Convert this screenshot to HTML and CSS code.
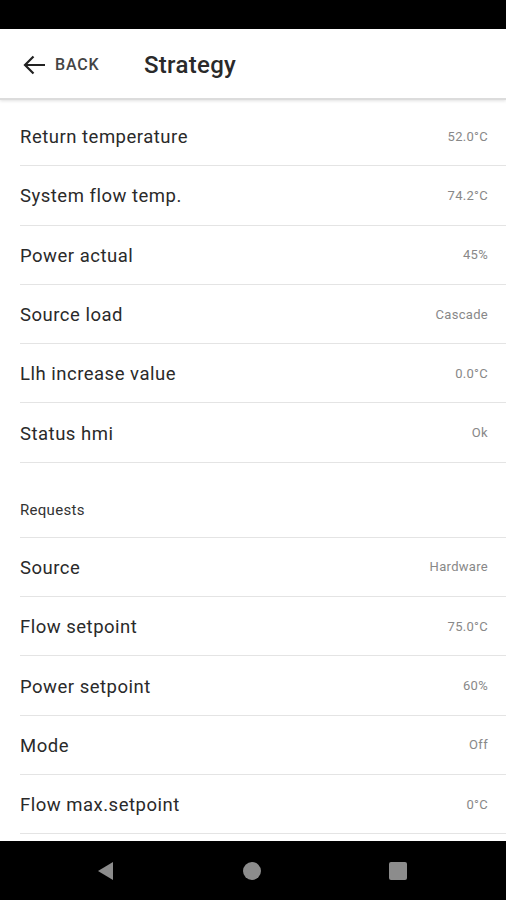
FILE: index.html
```html
<!DOCTYPE html>
<html>
<head>
<meta charset="utf-8">
<link rel="stylesheet" href="styles.css">
</head>
<body>
<div class="screen">
  <div class="statusbar"></div>
  <header class="appbar">
    <div class="back">
      <svg class="back-icon" width="24" height="20" viewBox="0 0 24 20"><path d="M22 10 H2.5 M10.5 1.5 L2 10 L10.5 18.5" fill="none" stroke="#222" stroke-width="2.2"/></svg>
      <span class="back-label">BACK</span>
    </div>
    <h1 class="title">Strategy</h1>
  </header>
  <main class="content">
    <ul class="list first">
      <li class="row"><span class="label">Return temperature</span><span class="value">52.0°C</span></li>
      <li class="row"><span class="label">System flow temp.</span><span class="value">74.2°C</span></li>
      <li class="row"><span class="label">Power actual</span><span class="value">45%</span></li>
      <li class="row"><span class="label">Source load</span><span class="value">Cascade</span></li>
      <li class="row"><span class="label">Llh increase value</span><span class="value">0.0°C</span></li>
      <li class="row"><span class="label">Status hmi</span><span class="value">Ok</span></li>
    </ul>
    <div class="section">Requests</div>
    <ul class="list">
      <li class="row"><span class="label">Source</span><span class="value">Hardware</span></li>
      <li class="row"><span class="label">Flow setpoint</span><span class="value">75.0°C</span></li>
      <li class="row"><span class="label">Power setpoint</span><span class="value">60%</span></li>
      <li class="row"><span class="label">Mode</span><span class="value">Off</span></li>
      <li class="row"><span class="label">Flow max.setpoint</span><span class="value">0°C</span></li>
    </ul>
  </main>
  <nav class="navbar">
    <svg width="20" height="20" viewBox="0 0 20 20"><path d="M17 1 L17 19 L2 10 Z" fill="#8c8c8c"/></svg>
    <svg width="20" height="20" viewBox="0 0 20 20"><circle cx="10" cy="10" r="9" fill="#8c8c8c"/></svg>
    <svg width="20" height="20" viewBox="0 0 20 20"><rect x="1" y="1" width="18" height="18" rx="2" fill="#8c8c8c"/></svg>
  </nav>
</div>
</body>
</html>
```
FILE: styles.css
```css
* { box-sizing: border-box; }
html, body { margin: 0; padding: 0; }
body {
  font-family: Roboto, "Liberation Sans", sans-serif;
  background: #000;
}
.screen {
  width: 506px;
  height: 900px;
  display: flex;
  flex-direction: column;
  background: #fff;
  overflow: hidden;
}
.statusbar {
  height: 29px;
  background: #000;
  flex: none;
}
.appbar {
  height: 71px;
  flex: none;
  display: flex;
  align-items: center;
  padding-top: 2px;
  background: #fff;
  border-bottom: 2px solid #dcdcdc;
  box-shadow: 0 1px 3px rgba(0,0,0,0.12);
  position: relative;
  z-index: 1;
}
.back {
  display: flex;
  align-items: center;
  padding-left: 23px;
  width: 144px;
}
.back-icon { flex: none; }
.back-label {
  margin-left: 8px;
  font-size: 16px;
  font-weight: 500;
  color: #444;
  letter-spacing: 0.8px;
}
.title {
  margin: 0;
  font-size: 24px;
  font-weight: 500;
  color: #2a2a2a;
  letter-spacing: 0.3px;
}
.content {
  flex: 1;
  overflow: hidden;
  padding-top: 7px;
}
.list {
  list-style: none;
  margin: 0;
  padding: 0 0 0 20px;
}
.row {
  height: 59.3px;
  display: flex;
  align-items: center;
  justify-content: space-between;
  border-bottom: 1.5px solid #e4e4e4;
  padding-right: 18px;
}
.label {
  font-size: 18.5px;
  color: #2a2a2a;
  letter-spacing: 0.5px;
  padding-top: 2px;
}
.value {
  font-size: 13px;
  color: #888;
  letter-spacing: 0.3px;
}
.section {
  margin-left: 20px;
  height: 75px;
  padding-top: 37px;
  font-size: 15px;
  line-height: 20px;
  color: #333;
  letter-spacing: 0.3px;
  border-bottom: 1.5px solid #e4e4e4;
}
.navbar {
  height: 59px;
  flex: none;
  background: #000;
  display: flex;
  align-items: center;
  padding-left: 96px;
  gap: 126px;
}
```
